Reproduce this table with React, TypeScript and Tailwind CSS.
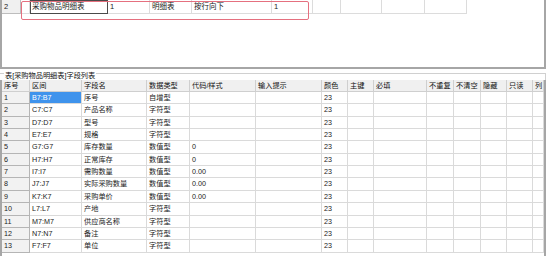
const font = "font-['Liberation_Sans','Noto_Sans_CJK_SC',sans-serif]";

const topCells = [
  { w: "w-[19px]", text: "2", fixed: true },
  { w: "w-[9px]", text: "" },
  { w: "w-[78px]", text: "采购物品明细表", focus: true },
  { w: "w-[42px]", text: "1" },
  { w: "w-[42px]", text: "明细表" },
  { w: "w-[80px]", text: "按行向下" },
  { w: "w-[41px]", text: "1" },
  { w: "w-[28px]", text: "" },
  { w: "w-[41px]", text: "" },
  { w: "w-[43px]", text: "" },
  { w: "w-[42px]", text: "" },
];

const heads = [
  "序号",
  "区间",
  "字段名",
  "数据类型",
  "代码/样式",
  "输入提示",
  "颜色",
  "主键",
  "必填",
  "不重复",
  "不清空",
  "隐藏",
  "只读",
  "列",
];

const fields = [
  ["1", "B7:B7", "序号", "自增型", ""],
  ["2", "C7:C7", "产品名称", "字符型", ""],
  ["3", "D7:D7", "型号", "字符型", ""],
  ["4", "E7:E7", "规格", "字符型", ""],
  ["5", "G7:G7", "库存数量", "数值型", "0"],
  ["6", "H7:H7", "正常库存", "数值型", "0"],
  ["7", "I7:I7", "需购数量", "数值型", "0.00"],
  ["8", "J7:J7", "实际采购数量", "数值型", "0.00"],
  ["9", "K7:K7", "采购单价", "数值型", "0.00"],
  ["10", "L7:L7", "产地", "字符型", ""],
  ["11", "M7:M7", "供应商名称", "字符型", ""],
  ["12", "N7:N7", "备注", "字符型", ""],
  ["13", "F7:F7", "单位", "字符型", ""],
];

const heights = [12, 13, 12, 12, 13, 12, 12, 13, 12, 13, 12, 12, 13];

const gridCols =
  "grid grid-cols-[28px_52px_65px_43px_66px_66px_26px_26px_53px_27px_27px_26px_26px_11px]";

export default function App() {
  return (
    <div className={`relative w-[547px] h-[256px] overflow-hidden bg-white text-[7.2px] text-[#222] ${font}`}>
      {/* top sheet panel */}
      <div className="w-[546px] h-[69px] border-l-2 border-r-2 border-b-2 border-[#a6a6a6] bg-white">
        <div className="flex h-[14px] text-[7.5px]">
          {topCells.map((c, i) => (
            <div
              key={i}
              className={`${c.w} h-[14px] flex items-center pl-[2px] border-r border-b leading-none whitespace-nowrap overflow-hidden ${
                c.fixed ? "bg-[#f0f0f0] border-[#bdbdbd]" : "border-[#dcdcdc]"
              } ${c.focus ? "outline outline-1 -outline-offset-1 outline-[#4a4a4a]" : ""}`}
            >
              {c.text}
            </div>
          ))}
        </div>
      </div>

      {/* red annotation box */}
      <div className="absolute left-[21px] top-[1px] w-[288px] h-[19px] border border-[#e5707f] rounded-[2px]" />

      {/* group caption */}
      <div className="flex h-[11px] w-[546px]">
        <div className="w-[4px] mt-[4px] border-t border-[#d0d0d0]" />
        <div className="px-[1px] pt-[2px] leading-[9px] text-[#111] whitespace-nowrap">
          表[采购物品明细表]字段列表
        </div>
        <div className="flex-1 mt-[4px] border-t border-r border-[#d0d0d0]" />
      </div>

      {/* field grid */}
      <div className="w-[546px] h-[176px] border-l-2 border-r-2 border-[#a6a6a6] overflow-hidden">
        <div className={`${gridCols} h-[12px] bg-[#f0f0f0]`}>
          {heads.map((h, i) => (
            <div
              key={i}
              className="flex items-center pl-[2px] border-r border-b border-[#cfcfcf] leading-none whitespace-nowrap overflow-hidden text-[#111]"
            >
              {h}
            </div>
          ))}
        </div>
        {fields.map((f, r) => {
          const cells = [f[0], f[1], f[2], f[3], f[4], "", "23", "", "", "", "", "", "", ""];
          return (
            <div key={r} className={`${gridCols} ${heights[r] === 13 ? "h-[13px]" : "h-[12px]"}`}>
              {cells.map((t, i) => (
                <div
                  key={i}
                  className={`flex items-center pl-[2px] border-r border-b leading-none whitespace-nowrap overflow-hidden ${
                    i === 0
                      ? "bg-[#f2f2f2] border-[#b5b5b5]"
                      : r === 0 && i === 1
                      ? "bg-[#3f93ec] text-white border-[#dadada]"
                      : "border-[#dadada]"
                  }`}
                >
                  {t}
                </div>
              ))}
            </div>
          );
        })}
      </div>
    </div>
  );
}
